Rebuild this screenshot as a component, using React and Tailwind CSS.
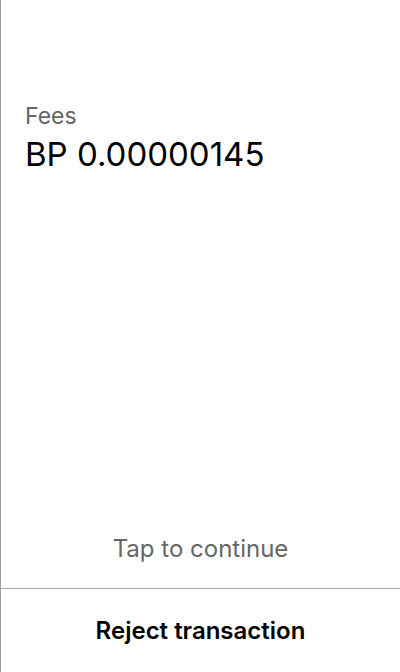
import React from 'react';

const App = () => {
  return (
    <div className="h-[672px] w-[400px] flex flex-col bg-white border-l border-[#a0a0a0] font-['Inter',sans-serif]">
      <div className="flex-1 flex flex-col px-6 pt-[101px]">
        <div className="text-[23px] leading-[30px] text-[#666666]">Fees</div>
        <div className="mt-[3px] text-[33px] leading-[40px] text-black">BP 0.00000145</div>
        <div className="flex-1" />
        <button className="mb-[24px] text-[24px] leading-[30px] text-[#666666] text-center">Tap to continue</button>
      </div>
      <div className="border-t border-[#a8a8a8] h-[84px] flex items-center justify-center">
        <button className="text-[24px] leading-[30px] font-semibold text-black">Reject transaction</button>
      </div>
    </div>
  );
};

export default App;
